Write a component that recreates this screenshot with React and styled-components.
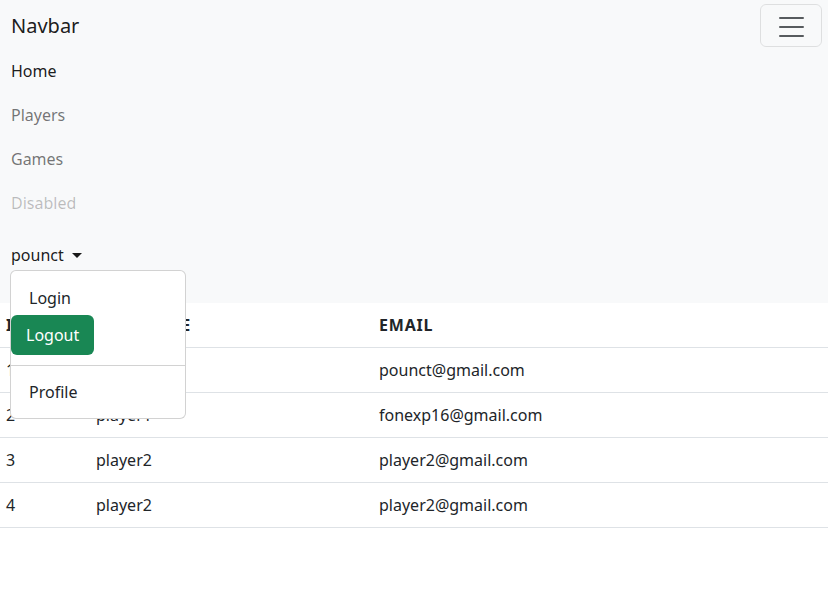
import React from 'react';
import styled, { createGlobalStyle } from 'styled-components';

const GlobalStyle = createGlobalStyle`
  body {
    margin: 0;
    background: #fff;
    color: #212529;
    font-family: 'Noto Sans', 'Open Sans', sans-serif;
    font-size: 16px;
    line-height: 24px;
  }
`;

const NavbarBox = styled.nav`
  background: #f8f9fa;
  padding: 4px 6px 28px 11px;
  display: flex;
  flex-direction: column;
`;

const NavHeader = styled.div`
  display: flex;
  justify-content: space-between;
  align-items: center;
  height: 43px;
`;

const Brand = styled.a`
  font-size: 20px;
  line-height: 30px;
  color: rgba(0, 0, 0, 0.9);
  text-decoration: none;
`;

const Toggler = styled.button`
  width: 62px;
  height: 43px;
  display: flex;
  align-items: center;
  justify-content: center;
  background: transparent;
  border: 1px solid rgba(0, 0, 0, 0.1);
  border-radius: 6px;
  padding: 0;
`;

const NavList = styled.ul`
  list-style: none;
  margin: 2px 0 0;
  padding: 0;
`;

const NavLink = styled.a`
  display: block;
  padding: 10px 0;
  text-decoration: none;
  color: ${(p) =>
    p.$active ? 'rgba(0,0,0,0.9)' : p.$disabled ? 'rgba(0,0,0,0.25)' : 'rgba(0,0,0,0.55)'};
`;

const DropdownItemWrap = styled.li`
  position: relative;
  margin-top: 10px;
`;

const DropdownToggle = styled.a`
  display: inline-flex;
  align-items: center;
  padding: 8px 0;
  color: rgba(0, 0, 0, 0.9);
  text-decoration: none;

  &::after {
    content: '';
    margin-left: 8px;
    border-top: 5px solid;
    border-right: 5px solid transparent;
    border-left: 5px solid transparent;
  }
`;

const Menu = styled.div`
  position: absolute;
  top: 35px;
  left: -1px;
  width: 174px;
  background: #fff;
  border: 1px solid rgba(0, 0, 0, 0.175);
  border-radius: 6px;
  padding: 15px 0 14px;
  z-index: 10;
`;

const MenuItem = styled.a`
  display: block;
  padding: 0 18px;
  color: #212529;
  text-decoration: none;
`;

const LogoutButton = styled.button`
  display: block;
  margin-top: 5px;
  height: 40px;
  padding: 0 15px;
  border: none;
  border-radius: 6px;
  background: #198754;
  color: #fff;
  font: inherit;
  font-size: 16px;
`;

const Divider = styled.hr`
  margin: 10px 0 14px;
  border: 0;
  border-top: 1px solid rgba(0, 0, 0, 0.175);
`;

const Table = styled.table`
  width: 100%;
  border-collapse: collapse;
`;

const Th = styled.th`
  text-align: left;
  font-weight: 700;
  letter-spacing: 0.8px;
  padding: 10px 6px;
  border-bottom: 1px solid #dee2e6;
  width: ${(p) => p.$w || 'auto'};
`;

const Td = styled.td`
  padding: 10px 6px;
  border-bottom: 1px solid #dee2e6;
`;

const players = [
  { id: 1, username: 'pounct', email: 'pounct@gmail.com' },
  { id: 2, username: 'player1', email: 'fonexp16@gmail.com' },
  { id: 3, username: 'player2', email: 'player2@gmail.com' },
  { id: 4, username: 'player2', email: 'player2@gmail.com' },
];

export default function App() {
  return (
    <>
      <GlobalStyle />
      <NavbarBox>
        <NavHeader>
          <Brand href="#">Navbar</Brand>
          <Toggler aria-label="Toggle navigation">
            <svg width="30" height="30" viewBox="0 0 30 30">
              <path
                d="M4 7h23M4 16h23M4 25h23"
                stroke="rgba(33,37,41,0.75)"
                strokeWidth="2"
                strokeLinecap="round"
              />
            </svg>
          </Toggler>
        </NavHeader>
        <NavList>
          <li><NavLink href="#" $active>Home</NavLink></li>
          <li><NavLink href="#">Players</NavLink></li>
          <li><NavLink href="#">Games</NavLink></li>
          <li><NavLink $disabled>Disabled</NavLink></li>
          <DropdownItemWrap>
            <DropdownToggle href="#">pounct</DropdownToggle>
            <Menu>
              <MenuItem href="#">Login</MenuItem>
              <LogoutButton>Logout</LogoutButton>
              <Divider />
              <MenuItem href="#">Profile</MenuItem>
            </Menu>
          </DropdownItemWrap>
        </NavList>
      </NavbarBox>
      <Table>
        <thead>
          <tr>
            <Th $w="78px">ID</Th>
            <Th $w="271px">USERNAME</Th>
            <Th>EMAIL</Th>
          </tr>
        </thead>
        <tbody>
          {players.map((p) => (
            <tr key={p.id}>
              <Td>{p.id}</Td>
              <Td>{p.username}</Td>
              <Td>{p.email}</Td>
            </tr>
          ))}
        </tbody>
      </Table>
    </>
  );
}
